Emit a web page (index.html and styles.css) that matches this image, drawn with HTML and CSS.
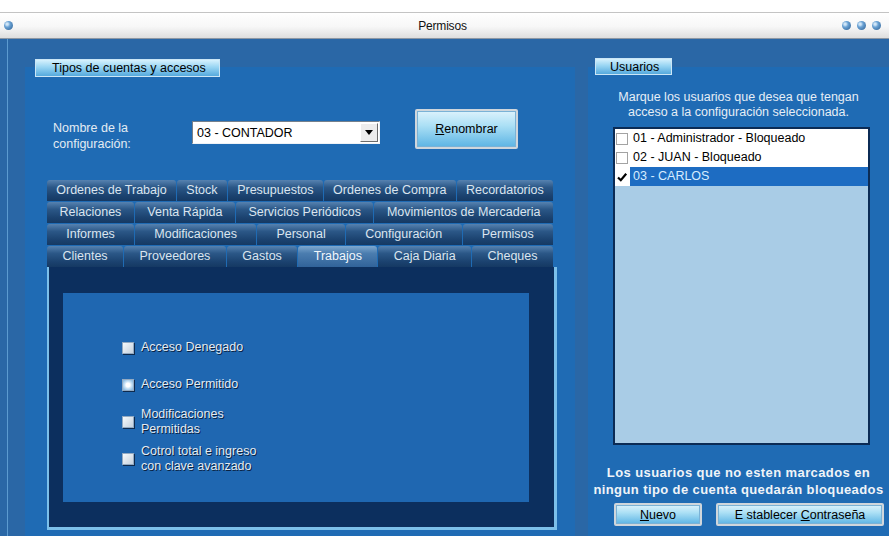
FILE: index.html
```html
<!DOCTYPE html>
<html lang="es">
<head>
<meta charset="utf-8">
<title>Permisos</title>
<link rel="stylesheet" href="styles.css">
</head>
<body>
<div class="window">
  <div class="titlebar">
    <span class="orbs orbs-left"><span class="orb"></span></span>
    <span class="title">Permisos</span>
    <span class="orbs orbs-right"><span class="orb"></span><span class="orb"></span><span class="orb"></span></span>
  </div>

  <div class="client">
    <section class="group group-accounts">
      <div class="legend legend-accounts">Tipos de cuentas y accesos</div>

      <div class="config-row">
        <div class="config-label">Nombre de la<br>configuración:</div>
        <div class="combo">
          <span class="combo-value">03 - CONTADOR</span>
          <span class="combo-btn">
            <svg width="8" height="5" viewBox="0 0 8 5"><polygon points="0,0 8,0 4,5" fill="#000"/></svg>
          </span>
        </div>
        <button class="btn btn-rename"><u>R</u>enombrar</button>
      </div>

      <div class="tabs">
        <div class="tab-row">
          <span class="tab">Ordenes de Trabajo</span>
          <span class="tab">Stock</span>
          <span class="tab">Presupuestos</span>
          <span class="tab">Ordenes de Compra</span>
          <span class="tab">Recordatorios</span>
        </div>
        <div class="tab-row">
          <span class="tab">Relaciones</span>
          <span class="tab">Venta Rápida</span>
          <span class="tab">Servicios Periódicos</span>
          <span class="tab">Movimientos de Mercaderia</span>
        </div>
        <div class="tab-row">
          <span class="tab">Informes</span>
          <span class="tab">Modificaciones</span>
          <span class="tab">Personal</span>
          <span class="tab">Configuración</span>
          <span class="tab">Permisos</span>
        </div>
        <div class="tab-row">
          <span class="tab">Clientes</span>
          <span class="tab">Proveedores</span>
          <span class="tab">Gastos</span>
          <span class="tab active">Trabajos</span>
          <span class="tab">Caja Diaria</span>
          <span class="tab">Cheques</span>
        </div>
      </div>

      <div class="tab-body">
        <div class="tab-page">
          <div class="option"><span class="check"></span><span class="opt-text">Acceso Denegado</span></div>
          <div class="option"><span class="check on"></span><span class="opt-text">Acceso Permitido</span></div>
          <div class="option"><span class="check"></span><span class="opt-text">Modificaciones<br>Permitidas</span></div>
          <div class="option"><span class="check"></span><span class="opt-text">Cotrol total e ingreso<br>con clave avanzado</span></div>
        </div>
      </div>
    </section>

    <section class="group group-users">
      <div class="legend legend-users">Usuarios</div>
      <p class="users-hint">Marque los usuarios que desea que tengan<br>acceso a la configuración seleccionada.</p>

      <div class="user-list">
        <div class="user"><span class="box"></span><span class="name">01 - Administrador - Bloqueado</span></div>
        <div class="user"><span class="box"></span><span class="name">02 - JUAN - Bloqueado</span></div>
        <div class="user sel">
          <span class="box checked">
            <svg width="12" height="12" viewBox="0 0 12 12"><path d="M2 6.5 L4.8 9.2 L10.2 2.8" fill="none" stroke="#000" stroke-width="2.2"/></svg>
          </span>
          <span class="name">03 - CARLOS</span>
        </div>
      </div>

      <p class="users-note">Los usuarios que no esten marcados en<br>ningun tipo de cuenta quedarán bloqueados</p>

      <div class="user-actions">
        <button class="btn btn-new"><u>N</u>uevo</button>
        <button class="btn btn-pass">E stablecer <u>C</u>ontraseña</button>
      </div>
    </section>
  </div>
</div>
</body>
</html>
```

FILE: styles.css
```css
* { box-sizing: border-box; }

html, body {
  margin: 0;
  padding: 0;
}

body {
  width: 889px;
  height: 536px;
  overflow: hidden;
  background: #ffffff;
  font-family: "Liberation Sans", Arial, sans-serif;
}

.window {
  height: 536px;
  padding-top: 12px;
  display: flex;
  flex-direction: column;
}

/* ---- title bar ---- */
.titlebar {
  flex: none;
  height: 27px;
  display: grid;
  grid-template-columns: 1fr auto 1fr;
  align-items: center;
  padding: 0 8px 0 4px;
  border-top: 1px solid #c4c4c4;
  border-bottom: 1px solid #8d97a3;
  background: linear-gradient(#ffffff, #f7f7f7 55%, #dedede);
}

.title {
  font-size: 12px;
  color: #111;
  letter-spacing: -0.2px;
}

.orbs { display: flex; gap: 6px; }
.orbs-right { justify-content: flex-end; }

.orb {
  width: 9px;
  height: 9px;
  border-radius: 50%;
  background: radial-gradient(circle at 35% 35%, #cfe5f7 0 1px, #6aa2d4 3px, #285a8f);
}

/* ---- client area ---- */
.client {
  flex: 1;
  display: flex;
  gap: 13px;
  padding: 28px 0 0 25px;
  overflow: hidden;
  background:
    linear-gradient(to right, transparent 7px, #5c9bd0 7px, #5c9bd0 8px, transparent 8px),
    #2a67a6;
}

.group {
  display: flex;
  flex-direction: column;
  background: #1f6bb4;
}

.group-accounts { width: 550px; flex: none; }
.group-users { width: 301px; flex: none; }

.legend {
  font-size: 12.5px;
  line-height: 16px;
  color: #000;
  white-space: nowrap;
  background: linear-gradient(#d6f1fd, #98d5f3 45%, #55a9dd);
  border: 1px solid #cbe6f6;
}

.legend-accounts {
  margin: -8px 0 0 10px;
  width: 185px;
  height: 18px;
  padding-left: 16px;
}

.legend-users {
  margin: -9px 0 0 7px;
  width: 77px;
  height: 17px;
  padding-left: 14px;
}

/* ---- configuration selector ---- */
.config-row {
  display: flex;
  align-items: flex-start;
  height: 40px;
  margin-top: 32px;
  padding-left: 28px;
}

.config-label {
  width: 139px;
  margin-top: 11px;
  font-size: 12.5px;
  line-height: 16px;
  color: #e3ebf3;
}

.combo {
  width: 188px;
  height: 23px;
  margin-top: 12px;
  display: flex;
  align-items: center;
  background: #ffffff;
  border: 1px solid;
  border-color: #75808c #eef2f6 #eef2f6 #75808c;
}

.combo-value {
  flex: 1;
  padding-left: 4px;
  font-size: 12.5px;
  color: #000;
}

.combo-btn {
  width: 18px;
  height: 19px;
  margin-right: 1px;
  display: flex;
  align-items: center;
  justify-content: center;
  background: #ececec;
  border: 1px solid;
  border-color: #ffffff #6b6b6b #6b6b6b #ffffff;
}

.btn {
  padding: 0;
  font: 12.5px "Liberation Sans", Arial, sans-serif;
  color: #000;
  background: linear-gradient(#dcf2fc, #ace0f5 40%, #5cb4e4);
  border: 2px solid #cfd6dc;
  border-radius: 2px;
  box-shadow: inset 0 0 0 1px #7ab2d6;
}

.btn-rename {
  margin-left: 35px;
  width: 103px;
  height: 40px;
}

/* ---- tab strip ---- */
.tabs {
  width: 506px;
  margin: 31px 0 0 22px;
  display: flex;
  flex-direction: column;
  gap: 1px;
}

.tab-row {
  display: flex;
  gap: 1px;
  height: 21px;
}

.tab {
  flex: 1 1 auto;
  padding: 0 6px;
  text-align: center;
  white-space: nowrap;
  font-size: 12.5px;
  line-height: 21px;
  color: #dbe5ef;
  border-radius: 3px 3px 0 0;
  background: linear-gradient(#5682b0, #2b5787 35%, #1b426f 75%, #153963);
}

.tab.active {
  color: #f1f6fb;
  background: linear-gradient(#7ea8d0, #4b7daf 35%, #31639a);
}

.tab-body {
  flex: none;
  width: 510px;
  height: 263px;
  margin-left: 22px;
  padding: 26px 25px 25px 14px;
  background: #0c2f5e;
  border-left: 2px solid #7cc0ea;
  border-right: 3px solid #7cc0ea;
  border-bottom: 3px solid #7cc0ea;
}

.tab-page {
  height: 100%;
  display: grid;
  grid-auto-rows: 37px;
  align-content: start;
  padding: 36px 0 0 59px;
  background: #1f67b1;
}

.option {
  display: flex;
  align-items: center;
  gap: 7px;
}

.check {
  flex: none;
  width: 12px;
  height: 12px;
  border: 1px solid #93aac2;
  background: linear-gradient(135deg, #f6f9fb, #c4d1de);
  box-shadow: 1px 1px 0 #0e2a4d;
}

.check.on {
  background: radial-gradient(circle, #ffffff 0 2px, #d8ecfa 3px, #8fbde2 6px);
}

.opt-text {
  font-size: 12.5px;
  line-height: 15px;
  color: #e4ebf3;
  text-shadow: 1px 1px 0 #0a2242;
}

/* ---- users panel ---- */
.users-hint {
  margin: 15px 0 0;
  text-align: center;
  font-size: 12.5px;
  line-height: 15px;
  color: #e6eef6;
}

.user-list {
  width: 257px;
  height: 318px;
  margin: 7px 0 0 25px;
  background: #a9cce6;
  border: 2px solid #0b2b55;
}

.user {
  height: 19px;
  display: flex;
  align-items: center;
  padding-left: 1px;
  background: #ffffff;
}

.box {
  flex: none;
  width: 12px;
  height: 12px;
  margin-right: 2px;
  border: 1px solid #a3a3a3;
  background: #ffffff;
}

.box.checked {
  border: none;
  display: flex;
}

.name {
  flex: 1;
  height: 19px;
  line-height: 19px;
  padding-left: 3px;
  font-size: 12.5px;
  color: #000;
  white-space: nowrap;
}

.user.sel .name {
  background: #1d6cc2;
  color: #d6ecff;
}

.users-note {
  margin: 19px 0 0;
  text-align: center;
  white-space: nowrap;
  font-size: 13px;
  font-weight: bold;
  letter-spacing: 0.4px;
  line-height: 17px;
  color: #f0f4f8;
}

.user-actions {
  display: flex;
  gap: 14px;
  margin: 5px 0 0 26px;
}

.btn-new { width: 88px; height: 23px; }
.btn-pass { width: 168px; height: 23px; }
```
